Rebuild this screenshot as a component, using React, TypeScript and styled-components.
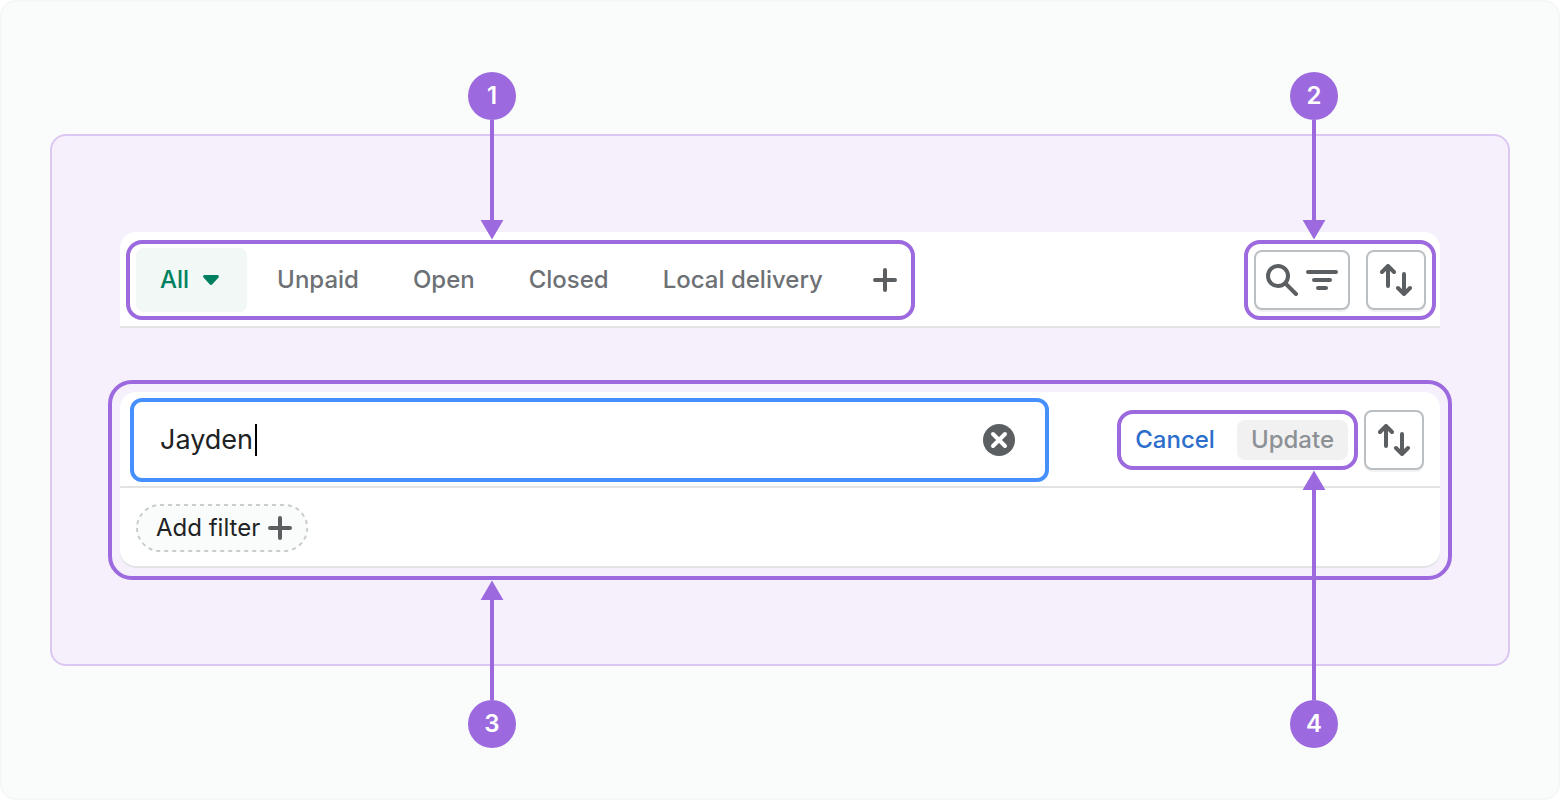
import React from "react";
import styled, { createGlobalStyle, css } from "styled-components";

const purple = "#9c6ade";
const iconGrey = "#5c5f62";

const GlobalStyle = createGlobalStyle`
  *, *::before, *::after { box-sizing: border-box; }
  body { margin: 0; background: #ffffff; font-family: Inter, "Liberation Sans", sans-serif; }
  button, input { font: inherit; color: inherit; margin: 0; }
`;

const Canvas = styled.main`
  display: flex;
  flex-direction: column;
  justify-content: center;
  min-height: 100vh;
  padding: 48px;
  background: #fafcfb;
  border: 2px solid #f5f6f6;
  border-radius: 16px;
`;

const Stage = styled.section`
  display: flex;
  flex-direction: column;
  gap: 52px;
  padding: 96px 56px 84px;
  background: #f6f0fd;
  border: 2px solid #dcc6f3;
  border-radius: 16px;
`;

const Toolbar = styled.div`
  display: flex;
  align-items: stretch;
  justify-content: space-between;
  margin: 0 12px;
  padding: 8px 4px 6px 6px;
  background: #ffffff;
  border-bottom: 2px solid #e1e3e5;
  border-radius: 16px 16px 0 0;
`;

const Highlight = styled.div<{ $gap?: number }>`
  position: relative;
  display: flex;
  align-items: center;
  gap: ${(p) => p.$gap ?? 0}px;
  padding: 4px 6px;
  border: 4px solid ${purple};
  border-radius: 16px;
`;

const Frame = styled.div`
  position: relative;
  padding: 8px;
  border: 4px solid ${purple};
  border-radius: 24px;
`;

const Tab = styled.button<{ $active?: boolean }>`
  display: flex;
  align-items: center;
  gap: 14px;
  height: 64px;
  padding: 0 ${(p) => (p.$active ? 28 : 24)}px 0 24px;
  border: 0;
  border-radius: 8px;
  background: ${(p) => (p.$active ? "#f1f8f5" : "transparent")};
  color: ${(p) => (p.$active ? "#008060" : "#6d7175")};
  font-size: 24px;
  line-height: 32px;
  font-weight: 500;
  white-space: nowrap;
`;

const AddView = styled.button`
  display: flex;
  align-items: center;
  height: 64px;
  padding: 0 8px 0 20px;
  border: 0;
  background: transparent;
`;

const IconButton = styled.button`
  display: flex;
  align-items: center;
  gap: 8px;
  height: 60px;
  padding: 0 12px;
  border: 2px solid #babfc3;
  border-radius: 8px;
  background: #ffffff;
  box-shadow: 0 2px 0 rgba(0, 0, 0, 0.05);
`;

const SearchButton = styled(IconButton)`
  padding: 0 10px;
`;

const Card = styled.div`
  background: #ffffff;
  border-radius: 16px;
  box-shadow: inset 0 -2px 0 #e1e3e5;
`;

const SearchRow = styled.div`
  display: flex;
  align-items: center;
  gap: 6px;
  padding: 6px 16px 4px 10px;
  border-bottom: 2px solid #e1e3e5;
`;

const SearchField = styled.label`
  display: flex;
  align-items: center;
  flex: 1;
  height: 84px;
  margin-right: 62px;
  padding: 0 30px 0 26px;
  border: 4px solid #458fff;
  border-radius: 12px;
  background: #ffffff;
`;

const SearchInput = styled.input`
  field-sizing: content;
  padding: 0;
  border: 0;
  outline: 0;
  background: transparent;
  color: #202223;
  font-size: 27px;
  line-height: 40px;
`;

const TextCursor = styled.span`
  width: 2px;
  height: 32px;
  margin-left: 2px;
  background: #000000;
`;

const ClearButton = styled.button`
  display: flex;
  margin-left: auto;
  padding: 0;
  border: 0;
  background: transparent;
`;

const TextButton = styled.button<{ $muted?: boolean }>`
  height: 40px;
  padding: 0 14px;
  border: 0;
  border-radius: 8px;
  background: transparent;
  color: #2c6ecb;
  font-size: 24px;
  line-height: 32px;
  font-weight: 500;
  ${(p) =>
    p.$muted &&
    css`
      background: #f1f1f1;
      color: #8c9196;
    `}
`;

const Actions = styled(Highlight)`
  height: 60px;
  padding: 0 6px 0 0;
`;

const FilterRow = styled.div`
  display: flex;
  padding: 16px;
`;

const AddFilter = styled.button`
  position: relative;
  display: flex;
  align-items: center;
  gap: 8px;
  height: 48px;
  padding: 0 16px 0 20px;
  border: 0;
  border-radius: 24px;
  background: #fafbfb;
  color: #202223;
  font-size: 24px;
  line-height: 32px;
`;

const DashedOutline = styled.svg`
  position: absolute;
  inset: 0;
  width: 100%;
  height: 100%;
`;

const Pointer = styled.div<{ $up?: boolean; $left?: number; $right?: number; $length: number }>`
  position: absolute;
  z-index: 1;
  display: flex;
  flex-direction: ${(p) => (p.$up ? "column-reverse" : "column")};
  align-items: center;
  height: ${(p) => p.$length}px;
  ${(p) => (p.$up ? "top" : "bottom")}: calc(100% + 4px);
  ${(p) => (p.$left !== undefined ? `left: ${p.$left}px` : `right: ${p.$right}px`)};
  pointer-events: none;
`;

const Badge = styled.span`
  display: flex;
  align-items: center;
  justify-content: center;
  width: 48px;
  height: 48px;
  border-radius: 50%;
  background: ${purple};
  color: #ffffff;
  font-size: 24px;
  line-height: 32px;
  font-weight: 600;
`;

const Stem = styled.span`
  flex: 1;
  width: 4px;
  background: ${purple};
`;

type CalloutProps = { label: number; up?: boolean; left?: number; right?: number; length?: number };

const Callout = ({ label, up, left, right, length = 168 }: CalloutProps) => (
  <Pointer $up={up} $left={left} $right={right} $length={length}>
    <Badge>{label}</Badge>
    <Stem />
    <svg width="24" height="20" viewBox="0 0 24 20" fill={purple} aria-hidden="true">
      <path d={up ? "M12 .5 23.4 20H.6Z" : "M12 19.5 23.4 0H.6Z"} />
    </svg>
  </Pointer>
);

const strokeProps = {
  fill: "none",
  stroke: iconGrey,
  strokeWidth: 4,
  strokeLinecap: "round" as const,
  strokeLinejoin: "round" as const,
  "aria-hidden": true,
};

const PlusIcon = () => (
  <svg width="24" height="24" viewBox="0 0 24 24" {...strokeProps}>
    <path d="M12 2v20M2 12h20" />
  </svg>
);

const CaretIcon = () => (
  <svg width="16" height="10" viewBox="0 0 16 10" fill="#008060" aria-hidden="true">
    <path d="M1.6 0h12.8c1.4 0 2.1 1.6 1.1 2.6L9.4 9.3a2 2 0 0 1-2.8 0L.5 2.6C-.5 1.6.2 0 1.6 0Z" />
  </svg>
);

const SearchIcon = () => (
  <svg width="32" height="32" viewBox="0 0 32 32" {...strokeProps}>
    <circle cx="12" cy="12" r="10" />
    <path d="M19.5 19.5 30 30" />
  </svg>
);

const FilterIcon = () => (
  <svg width="32" height="32" viewBox="0 0 32 32" {...strokeProps}>
    <path d="M2 8h28M8 16h16M12 24h8" />
  </svg>
);

const SortIcon = () => (
  <svg width="32" height="32" viewBox="0 0 32 32" {...strokeProps}>
    <path d="M2 8l6-6 6 6M8 2v20M18 24l6 6 6-6M24 30V10" />
  </svg>
);

const ClearIcon = () => (
  <svg width="32" height="32" viewBox="0 0 32 32" aria-hidden="true">
    <circle cx="16" cy="16" r="16" fill={iconGrey} />
    <path d="M10 10l12 12M22 10 10 22" stroke="#ffffff" strokeWidth="4" strokeLinecap="round" />
  </svg>
);

export default function App() {
  return (
    <>
      <GlobalStyle />
      <Canvas>
        <Stage>
          <Toolbar>
            <Highlight $gap={6}>
              <Tab $active>
                All
                <CaretIcon />
              </Tab>
              <Tab>Unpaid</Tab>
              <Tab>Open</Tab>
              <Tab>Closed</Tab>
              <Tab>Local delivery</Tab>
              <AddView aria-label="Add view">
                <PlusIcon />
              </AddView>
              <Callout label={1} left={338} />
            </Highlight>
            <Highlight $gap={16}>
              <SearchButton aria-label="Search and filter">
                <SearchIcon />
                <FilterIcon />
              </SearchButton>
              <IconButton aria-label="Sort">
                <SortIcon />
              </IconButton>
              <Callout label={2} right={94} />
            </Highlight>
          </Toolbar>
          <Frame>
            <Card>
              <SearchRow>
                <SearchField>
                  <SearchInput aria-label="Search" defaultValue="Jayden" />
                  <TextCursor />
                  <ClearButton type="button" aria-label="Clear">
                    <ClearIcon />
                  </ClearButton>
                </SearchField>
                <Actions $gap={8}>
                  <TextButton>Cancel</TextButton>
                  <TextButton $muted>Update</TextButton>
                  <Callout label={4} up right={16} length={278} />
                </Actions>
                <IconButton aria-label="Sort">
                  <SortIcon />
                </IconButton>
              </SearchRow>
              <FilterRow>
                <AddFilter>
                  <DashedOutline aria-hidden="true">
                    <rect
                      x="1"
                      y="1"
                      rx="23"
                      fill="none"
                      stroke="#c9cccf"
                      strokeWidth="2"
                      strokeDasharray="4 4"
                      style={{ width: "calc(100% - 2px)", height: "calc(100% - 2px)" }}
                    />
                  </DashedOutline>
                  Add filter
                  <PlusIcon />
                </AddFilter>
              </FilterRow>
            </Card>
            <Callout label={3} up left={356} />
          </Frame>
        </Stage>
      </Canvas>
    </>
  );
}
